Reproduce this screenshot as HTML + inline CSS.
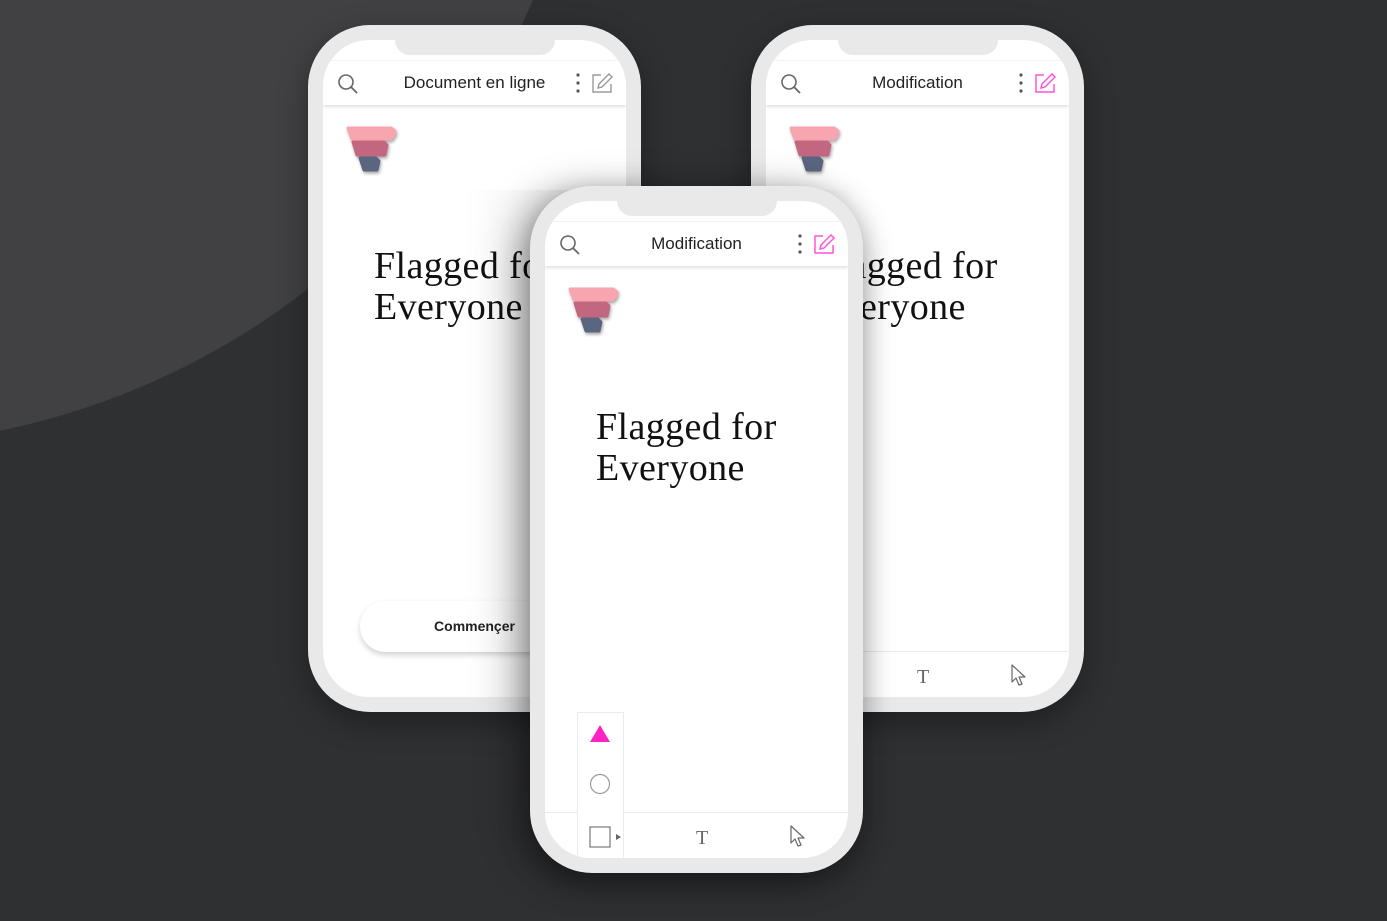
<!DOCTYPE html>
<html><head><meta charset="utf-8"><style>
*{margin:0;padding:0;box-sizing:border-box}
body{width:1387px;height:921px;overflow:hidden;background:#2f3032;position:relative;font-family:"Liberation Sans",sans-serif}
.arc{position:absolute;left:-896px;top:-1046px;width:1492px;height:1492px;border-radius:50%;background:#414143}
.phone{position:absolute;width:333px;height:687px;background:#e9e9e9;border-radius:62px;box-shadow:0 10px 30px rgba(0,0,0,.35)}
.screen{position:absolute;left:15px;top:15px;width:303px;height:657px;background:#fff;border-radius:46px;overflow:hidden}
.notch{position:absolute;left:72px;top:0;width:160px;height:15px;background:#e9e9e9;border-radius:0 0 18px 18px}
.hdr{position:absolute;left:0;top:20px;width:303px;height:45px;background:#fff;border-top:1px solid #f3f3f3;box-shadow:0 2px 3px rgba(0,0,0,.12)}
.ttl{position:absolute;left:0;width:303px;top:12px;text-align:center;font-size:17px;color:#222}
.hero{position:absolute;left:51px;top:206px;font-family:"Liberation Serif",serif;font-size:38px;line-height:41px;color:#111;white-space:nowrap;letter-spacing:.4px}
.logo{position:absolute;left:22px;top:85px}
.tb{position:absolute;left:0;top:611px;width:303px;height:46px;border-top:1px solid #ebebeb;background:#fff}
.T{position:absolute;top:14px;font-family:"Liberation Serif",serif;font-size:20px;color:#666}
.btn{position:absolute;left:37px;top:561px;width:229px;height:51px;border-radius:26px;background:#fff;box-shadow:0 3px 6px rgba(0,0,0,.18);text-align:center;line-height:51px;font-size:14px;font-weight:bold;color:#222}
</style></head><body>
<div class="arc"></div>

<!-- LEFT PHONE -->
<div class="phone" style="left:308px;top:25px">
 <div class="screen">
  <div class="notch"></div>
  <div class="hdr">
   <svg width="303" height="45" style="position:absolute;left:0;top:0"><circle cx="23" cy="21" r="7" fill="none" stroke="#666" stroke-width="1.6"/><line x1="28" y1="26" x2="34" y2="32" stroke="#666" stroke-width="1.8"/>
   <circle cx="255" cy="14" r="1.6" fill="#555"/><circle cx="255" cy="22" r="1.6" fill="#555"/><circle cx="255" cy="30" r="1.6" fill="#555"/>
   <path d="M278 14h-8v17h18v-8" fill="none" stroke="#999" stroke-width="1.4"/><path d="M275 27l1-4 10-10 3 3-10 10z" fill="none" stroke="#999" stroke-width="1.4"/></svg>
   <div class="ttl">Document en ligne</div>
  </div>
  <svg class="logo" width="55" height="52"><g stroke-linejoin="round" stroke-width="3" style="filter:drop-shadow(1px 2px 1.5px rgba(0,0,0,.35))">
   <polygon points="3,3 46,3 50,6 49,10 46,14 7,14" fill="#f7a6b0" stroke="#f7a6b0"/>
   <polygon points="8,17 39,17 42,20 40,30 12,30" fill="#c2677f" stroke="#c2677f"/>
   <polygon points="15,33 31,33 34,36 32,45 19,45" fill="#5a6580" stroke="#5a6580"/></g></svg>
  <div class="hero">Flagged for<br>Everyone</div>
  <div class="btn">Commençer</div>
  <div style="position:absolute;left:140px;top:150px;width:163px;height:507px;background:linear-gradient(90deg,rgba(0,0,0,0),rgba(0,0,0,.08))"></div>
 </div>
</div>

<!-- RIGHT PHONE -->
<div class="phone" style="left:751px;top:25px">
 <div class="screen">
  <div class="notch"></div>
  <div class="hdr">
   <svg width="303" height="45" style="position:absolute;left:0;top:0"><circle cx="23" cy="21" r="7" fill="none" stroke="#666" stroke-width="1.6"/><line x1="28" y1="26" x2="34" y2="32" stroke="#666" stroke-width="1.8"/>
   <circle cx="255" cy="14" r="1.6" fill="#555"/><circle cx="255" cy="22" r="1.6" fill="#555"/><circle cx="255" cy="30" r="1.6" fill="#555"/>
   <path d="M278 14h-8v17h18v-8" fill="none" stroke="#ff55d5" stroke-width="1.5"/><path d="M275 27l1-4 10-10 3 3-10 10z" fill="none" stroke="#ff55d5" stroke-width="1.5"/></svg>
   <div class="ttl">Modification</div>
  </div>
  <svg class="logo" width="55" height="52"><g stroke-linejoin="round" stroke-width="3" style="filter:drop-shadow(1px 2px 1.5px rgba(0,0,0,.35))">
   <polygon points="3,3 46,3 50,6 49,10 46,14 7,14" fill="#f7a6b0" stroke="#f7a6b0"/>
   <polygon points="8,17 39,17 42,20 40,30 12,30" fill="#c2677f" stroke="#c2677f"/>
   <polygon points="15,33 31,33 34,36 32,45 19,45" fill="#5a6580" stroke="#5a6580"/></g></svg>
  <div class="hero">Flagged for<br>Everyone</div>
  <div class="tb">
   <div class="T" style="left:151px">T</div>
   <svg width="20" height="24" style="position:absolute;left:244px;top:12px"><path d="M2 1v17l4-4 3 7 3-1-3-7h6z" fill="#fff" stroke="#666" stroke-width="1.2" stroke-linejoin="round"/></svg>
  </div>
  <div style="position:absolute;left:0;top:150px;width:90px;height:507px;background:linear-gradient(90deg,rgba(0,0,0,.08),rgba(0,0,0,0))"></div>
 </div>
</div>

<!-- CENTER PHONE -->
<div class="phone" style="left:530px;top:186px;box-shadow:-15px 5px 40px rgba(0,0,0,.28),0 10px 30px rgba(0,0,0,.35)">
 <div class="screen">
  <div class="notch"></div>
  <div class="hdr">
   <svg width="303" height="45" style="position:absolute;left:0;top:0"><circle cx="23" cy="21" r="7" fill="none" stroke="#666" stroke-width="1.6"/><line x1="28" y1="26" x2="34" y2="32" stroke="#666" stroke-width="1.8"/>
   <circle cx="255" cy="14" r="1.6" fill="#555"/><circle cx="255" cy="22" r="1.6" fill="#555"/><circle cx="255" cy="30" r="1.6" fill="#555"/>
   <path d="M278 14h-8v17h18v-8" fill="none" stroke="#ff55d5" stroke-width="1.5"/><path d="M275 27l1-4 10-10 3 3-10 10z" fill="none" stroke="#ff55d5" stroke-width="1.5"/></svg>
   <div class="ttl">Modification</div>
  </div>
  <svg class="logo" width="55" height="52"><g stroke-linejoin="round" stroke-width="3" style="filter:drop-shadow(1px 2px 1.5px rgba(0,0,0,.35))">
   <polygon points="3,3 46,3 50,6 49,10 46,14 7,14" fill="#f7a6b0" stroke="#f7a6b0"/>
   <polygon points="8,17 39,17 42,20 40,30 12,30" fill="#c2677f" stroke="#c2677f"/>
   <polygon points="15,33 31,33 34,36 32,45 19,45" fill="#5a6580" stroke="#5a6580"/></g></svg>
  <div class="hero">Flagged for<br>Everyone</div>
  <div class="tb">
   <div class="T" style="left:151px">T</div>
   <svg width="20" height="24" style="position:absolute;left:244px;top:12px"><path d="M2 1v17l4-4 3 7 3-1-3-7h6z" fill="#fff" stroke="#666" stroke-width="1.2" stroke-linejoin="round"/></svg>
  </div>
  <div style="position:absolute;left:32px;top:511px;width:47px;height:146px;background:#fff;border:1px solid #ebebeb;border-bottom:none">
   <svg width="47" height="146"><polygon points="22,12 32,29 12,29" fill="#ff22c4"/><circle cx="22" cy="71" r="9.5" fill="none" stroke="#999" stroke-width="1.2"/><rect x="12" y="114" width="20" height="20" fill="none" stroke="#777" stroke-width="1.2"/><polygon points="38,121 43,124 38,127" fill="#666"/></svg>
  </div>
 </div>
</div>
</body></html>
